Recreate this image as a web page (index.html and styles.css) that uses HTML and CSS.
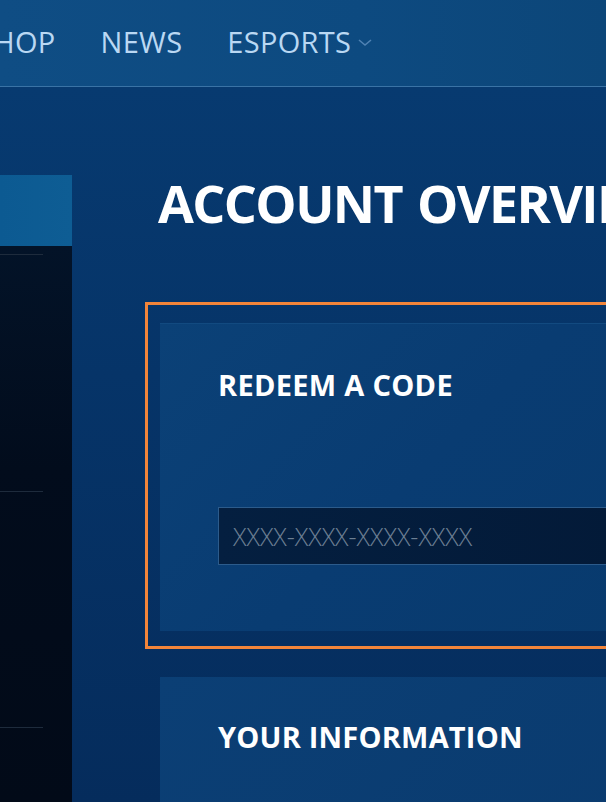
FILE: index.html
```html
<!DOCTYPE html>
<html>
<head>
<meta charset="utf-8">
<link rel="stylesheet" href="styles.css">
</head>
<body>
<header class="topnav">
  <nav class="nav-items">
    <span class="nav-item">SHOP</span>
    <span class="nav-item">NEWS</span>
    <span class="nav-item">ESPORTS<svg class="chev" width="14" height="8" viewBox="0 0 14 8"><path d="M1 1 L7 6 L13 1" fill="none" stroke="#4f82b3" stroke-width="1.6"/></svg></span>
  </nav>
</header>
<div class="layout">
  <aside class="sidebar">
    <div class="side-active"></div>
    <div class="side-list">
      <div class="side-row"></div>
      <div class="side-row tall"></div>
      <div class="side-row tall"></div>
    </div>
  </aside>
  <main class="content">
    <h1 class="title">ACCOUNT OVERVIEW</h1>
    <section class="focus-box">
      <div class="card redeem">
        <h2 class="card-title">REDEEM A CODE</h2>
        <div class="code-input">XXXX-XXXX-XXXX-XXXX</div>
      </div>
    </section>
    <section class="card info">
      <h2 class="card-title">YOUR INFORMATION</h2>
    </section>
  </main>
</div>
</body>
</html>
```
FILE: styles.css
```css
* { box-sizing: border-box; }
html, body {
  margin: 0;
  padding: 0;
  width: 606px;
  height: 802px;
  overflow: hidden;
  background: #06305f;
  font-family: "Open Sans", "Noto Sans", sans-serif;
}
.topnav {
  height: 87px;
  background: linear-gradient(90deg, #0f4d84 0%, #0d4a80 60%, #0c4679 100%);
  border-bottom: 1px solid #3a73a5;
  overflow: hidden;
}
.nav-items {
  display: flex;
  gap: 45px;
  margin-left: -23px;
  padding-top: 24px;
  white-space: nowrap;
}
.nav-item {
  font-size: 29px;
  line-height: 36px;
  color: #bad8f3;
  letter-spacing: 0.3px;
  display: flex;
  align-items: center;
}
.chev { margin-left: 7px; margin-top: 2px; }
.layout {
  display: grid;
  grid-template-columns: 72px 1fr;
  height: 715px;
  background: linear-gradient(180deg, #073a70 0%, #063468 40%, #052c5c 100%);
}
.sidebar {
  padding-top: 88px;
  display: flex;
  flex-direction: column;
}
.side-active {
  height: 71px;
  background: linear-gradient(90deg, #0c5a92 0%, #0e5d94 100%);
}
.side-list {
  flex: 1;
  background: linear-gradient(180deg, #031328 0%, #020c1c 40%, #020a18 100%);
}
.side-row {
  height: 9px;
  border-bottom: 1px solid #1e2b3c;
  width: 43px;
}
.side-row.tall { height: 237px; }
.side-row.tall + .side-row.tall { height: 236px; }
.content {
  padding-left: 73px;
  overflow: hidden;
}
.title {
  margin: 0 0 0 13px;
  padding-top: 86px;
  height: 146px;
  font-size: 52px;
  line-height: 60px;
  font-weight: 700;
  color: #ffffff;
  white-space: nowrap;
  letter-spacing: -1.6px;
  word-spacing: 3px;
}
.focus-box {
  margin-top: 69px;
  width: 520px;
  height: 347px;
  border: 3px solid #f2853a;
  border-right: none;
  padding: 18px 0 15px 12px;
}
.card {
  background: linear-gradient(135deg, #0b4177 0%, #093c72 50%, #083a6d 100%);
}
.redeem {
  height: 100%;
  padding: 43px 0 0 58px;
  border-top: 1px solid #124a80;
}
.card-title {
  margin: 0;
  font-size: 29px;
  line-height: 36px;
  font-weight: 700;
  color: #ffffff;
  white-space: nowrap;
  letter-spacing: 0.3px;
}
.code-input {
  margin-top: 104px;
  height: 58px;
  width: 400px;
  background: linear-gradient(90deg, #041f40 0%, #031a38 100%);
  border: 1px solid #2c5b8b;
  border-right: none;
  padding-left: 14px;
  font-size: 25px;
  line-height: 56px;
  font-weight: 300;
  color: #6c7f93;
  white-space: nowrap;
}
.info {
  margin: 28px 0 0 15px;
  height: 200px;
  padding: 42px 0 0 58px;
  background: linear-gradient(135deg, #0b3f75 0%, #0a3b6f 100%);
}
.info .card-title { font-size: 29px; letter-spacing: 0.2px; }
```
